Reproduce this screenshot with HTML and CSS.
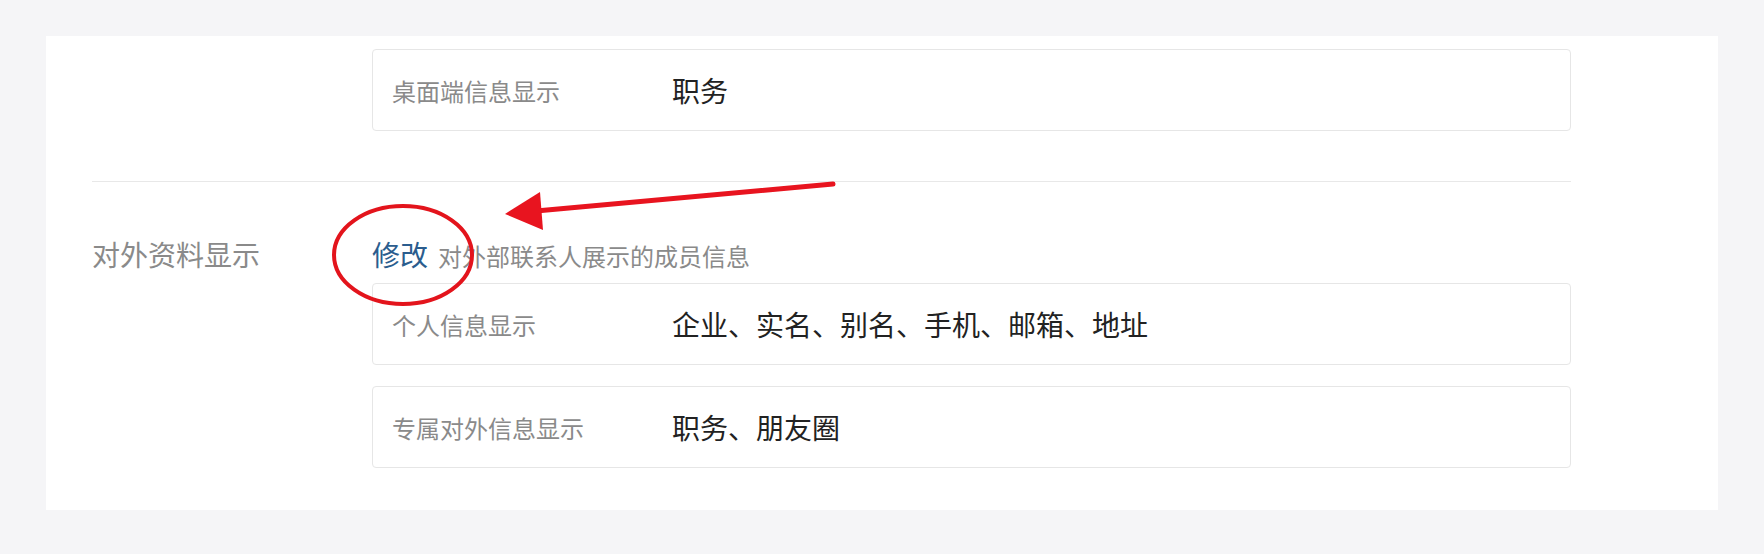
FILE: index.html
```html
<!DOCTYPE html>
<html lang="zh-CN">
<head>
  <meta charset="UTF-8">
  <title>成员资料显示设置</title>
  <link rel="stylesheet" href="styles.css">
</head>
<body>
  <div class="page">
    <div class="panel">
      <div class="row">
        <div class="row-label"></div>
        <div class="row-body">
          <div class="info-box">
            <span class="info-key">桌面端信息显示</span>
            <span class="info-val">职务</span>
          </div>
        </div>
      </div>

      <div class="divider"></div>

      <div class="row section">
        <div class="row-label">对外资料显示</div>
        <div class="row-body">
          <div class="row-head">
            <a class="edit-link" href="#">修改</a>
            <span class="hint">对外部联系人展示的成员信息</span>
          </div>
          <div class="info-box">
            <span class="info-key">个人信息显示</span>
            <span class="info-val">企业、实名、别名、手机、邮箱、地址</span>
          </div>
          <div class="info-box">
            <span class="info-key">专属对外信息显示</span>
            <span class="info-val">职务、朋友圈</span>
          </div>
        </div>
      </div>
    </div>

    <!-- annotation drawn on top of the screenshot -->
    <svg class="annotation" width="1764" height="554" viewBox="0 0 1764 554">
      <ellipse cx="403" cy="255" rx="69" ry="49" fill="none" stroke="#e3141c" stroke-width="4"/>
      <line x1="536" y1="211" x2="833" y2="184" stroke="#e8141f" stroke-width="5" stroke-linecap="round"/>
      <polygon points="505,214 540,192 543,230" fill="#e8141f"/>
    </svg>
  </div>
</body>
</html>
```

FILE: styles.css
```css
body {
  margin: 0;
  background: #f5f5f7;
  font-family: "Noto Sans CJK SC", "Noto Sans", sans-serif;
}

.page {
  position: relative;
  width: 1764px;
  height: 554px;
  padding: 36px 46px 0;
  box-sizing: border-box;
}

.panel {
  background: #fff;
  padding: 13px 147px 42px 46px;
}

.row {
  display: grid;
  grid-template-columns: 280px 1fr;
}

.row-label {
  font-size: 28px;
  line-height: 36px;
  color: #8a8a8a;
}

.row-head {
  display: flex;
  align-items: baseline;
  line-height: 36px;
  margin-bottom: 9px;
}

.edit-link {
  font-size: 28px;
  color: #2b5d8e;
  text-decoration: none;
}

.hint {
  margin-left: 10px;
  font-size: 24px;
  color: #8a8a8a;
}

.info-box {
  display: flex;
  align-items: center;
  height: 82px;
  box-sizing: border-box;
  padding-left: 19px;
  border: 1px solid #e6e6e6;
  border-radius: 4px;
}

.info-box + .info-box {
  margin-top: 21px;
}

.info-key {
  width: 280px;
  font-size: 24px;
  color: #8a8a8a;
}

.info-val {
  font-size: 28px;
  color: #222;
}

.divider {
  height: 1px;
  background: #e8e8e8;
  margin: 50px 0 54px;
}

.annotation {
  position: absolute;
  top: 0;
  left: 0;
  pointer-events: none;
}
```
